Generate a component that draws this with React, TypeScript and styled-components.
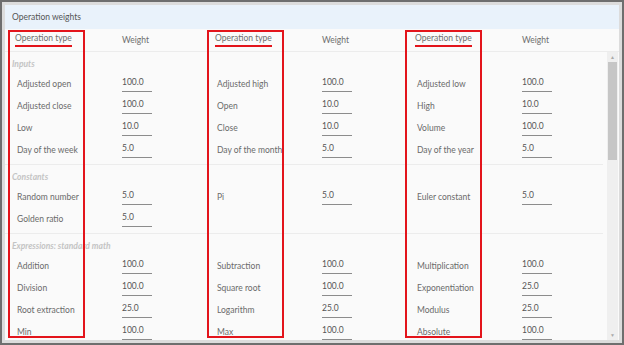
import React from 'react';
import styled, { createGlobalStyle } from 'styled-components';

const GlobalStyle = createGlobalStyle`
  html, body {
    margin: 0;
    padding: 0;
    background: #d9d9d9;
  }
  body {
    font-family: Lato, "Open Sans", sans-serif;
  }
`;

const Frame = styled.div`
  box-sizing: border-box;
  width: 624px;
  height: 345px;
  border: 2px solid #6e6e6e;
  background: #dcdcdc;
  padding: 3px;
`;

const Panel = styled.div`
  position: relative;
  height: 100%;
  background: #fafafa;
  display: flex;
  flex-direction: column;
  overflow: hidden;
`;

const TitleBar = styled.div`
  height: 24px;
  display: flex;
  align-items: center;
  padding-left: 7px;
  background: #e9f2fb;
  font-size: 8.5px;
  color: #555;
`;

const Grid = styled.div`
  display: grid;
  grid-template-columns: repeat(3, 112px 88px);
  padding-left: 5px;
`;

const HeaderRow = styled(Grid)`
  height: 22px;
  align-items: center;
  border-bottom: 1px solid #ececec;
  font-size: 8.5px;
  color: #6e6e6e;
`;

const HeadCell = styled.div<{ $first?: boolean }>`
  padding-left: ${p => (p.$first ? '5px' : '0')};
`;

const Marked = styled.span`
  display: inline-block;
  line-height: 10px;
  padding-bottom: 2px;
  border-bottom: 2px solid #e3141b;
`;

const BodyWrap = styled.div`
  flex: 1;
  display: flex;
  min-height: 0;
`;

const Body = styled.div`
  flex: 1;
  overflow: hidden;
`;

const Section = styled.div<{ $last?: boolean }>`
  padding: 3px 0 3px;
  margin-right: 4px;
  border-bottom: ${p => (p.$last ? 'none' : '1px solid #ececec')};
`;

const SectionTitle = styled.div`
  height: 18px;
  line-height: 18px;
  padding-left: 7px;
  font-size: 8.5px;
  font-style: italic;
  font-weight: 700;
  color: #c4c4c4;
`;

const Row = styled(Grid)`
  height: 22px;
  align-items: center;
  font-size: 8.5px;
`;

const Label = styled.div`
  padding-left: 7px;
  color: #6a6a6a;
`;

const Value = styled.div`
  width: 30px;
  padding-bottom: 3px;
  border-bottom: 1px solid #8c8c8c;
  color: #555;
  line-height: 11px;
`;

const Scrollbar = styled.div`
  width: 11px;
  margin-right: 1px;
  display: flex;
  flex-direction: column;
  background: #efefef;
`;

const ScrollArrow = styled.div`
  height: 10px;
  display: flex;
  align-items: center;
  justify-content: center;
  font-size: 5px;
  color: #aaa;
`;

const Thumb = styled.div`
  margin: 0 1px;
  height: 98px;
  background: #c6c6c6;
`;

const Track = styled.div`
  flex: 1;
`;

const Highlight = styled.div<{ $left: number }>`
  position: absolute;
  top: 25px;
  left: ${p => p.$left}px;
  width: 73px;
  height: 304px;
  border: 2px solid #e3141b;
  pointer-events: none;
`;

type Entry = [string, string] | null;
interface SectionData {
  title: string;
  rows: Entry[][];
}

const sections: SectionData[] = [
  {
    title: 'Inputs',
    rows: [
      [['Adjusted open', '100.0'], ['Adjusted high', '100.0'], ['Adjusted low', '100.0']],
      [['Adjusted close', '100.0'], ['Open', '10.0'], ['High', '10.0']],
      [['Low', '10.0'], ['Close', '10.0'], ['Volume', '100.0']],
      [['Day of the week', '5.0'], ['Day of the month', '5.0'], ['Day of the year', '5.0']],
    ],
  },
  {
    title: 'Constants',
    rows: [
      [['Random number', '5.0'], ['Pi', '5.0'], ['Euler constant', '5.0']],
      [['Golden ratio', '5.0'], null, null],
    ],
  },
  {
    title: 'Expressions: standard math',
    rows: [
      [['Addition', '100.0'], ['Subtraction', '100.0'], ['Multiplication', '100.0']],
      [['Division', '100.0'], ['Square root', '100.0'], ['Exponentiation', '25.0']],
      [['Root extraction', '25.0'], ['Logarithm', '25.0'], ['Modulus', '25.0']],
      [['Min', '100.0'], ['Max', '100.0'], ['Absolute', '100.0']],
    ],
  },
];

const App: React.FC = () => {
  return (
    <>
      <GlobalStyle />
      <Frame>
        <Panel>
          <TitleBar>Operation weights</TitleBar>
          <HeaderRow>
            {[0, 1, 2].map(i => (
              <React.Fragment key={i}>
                <HeadCell $first>
                  <Marked>Operation type</Marked>
                </HeadCell>
                <HeadCell>Weight</HeadCell>
              </React.Fragment>
            ))}
          </HeaderRow>
          <BodyWrap>
            <Body>
              {sections.map((s, si) => (
                <Section key={s.title} $last={si === sections.length - 1}>
                  <SectionTitle>{s.title}</SectionTitle>
                  {s.rows.map((row, ri) => (
                    <Row key={ri}>
                      {row.map((e, ci) => (
                        <React.Fragment key={ci}>
                          <Label>{e ? e[0] : ''}</Label>
                          <div>{e && <Value>{e[1]}</Value>}</div>
                        </React.Fragment>
                      ))}
                    </Row>
                  ))}
                </Section>
              ))}
            </Body>
            <Scrollbar>
              <ScrollArrow>▲</ScrollArrow>
              <Thumb />
              <Track />
              <ScrollArrow>▼</ScrollArrow>
            </Scrollbar>
          </BodyWrap>
          {[3, 202, 400].map(left => (
            <Highlight key={left} $left={left} />
          ))}
        </Panel>
      </Frame>
    </>
  );
};

export default App;
